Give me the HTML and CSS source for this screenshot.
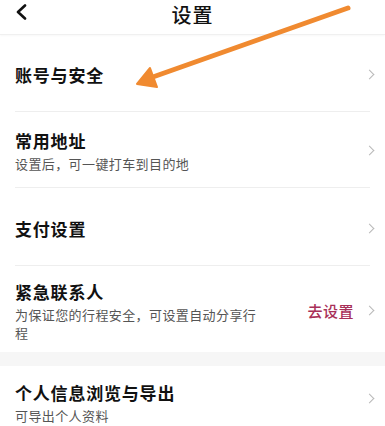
FILE: index.html
```html
<!DOCTYPE html>
<html lang="zh-CN">
<head>
    <meta charset="UTF-8">
    <meta name="viewport" content="width=device-width, initial-scale=1.0">
    <title>设置</title>
    <link rel="stylesheet" href="styles.css">
</head>
<body>
    <div class="page">
        <div class="header">
            <svg class="back" width="12" height="16" viewBox="0 0 12 16">
                <path d="M10 1.5 L3 8 L10 14.5" fill="none" stroke="#111" stroke-width="2.6" stroke-linecap="round" stroke-linejoin="round"/>
            </svg>
            <div class="title">设置</div>
        </div>

        <div class="group">
            <div class="row row-1">
                <div class="text">
                    <div class="name">账号与安全</div>
                </div>
                <span class="chev"></span>
            </div>
            <div class="row row-2">
                <div class="text">
                    <div class="name">常用地址</div>
                    <div class="sub">设置后，可一键打车到目的地</div>
                </div>
                <span class="chev"></span>
            </div>
            <div class="row row-3">
                <div class="text">
                    <div class="name">支付设置</div>
                </div>
                <span class="chev"></span>
            </div>
            <div class="row row-4">
                <div class="text">
                    <div class="name">紧急联系人</div>
                    <div class="sub narrow">为保证您的行程安全，可设置自动分享行程</div>
                </div>
                <span class="action">去设置</span>
                <span class="chev"></span>
            </div>
        </div>

        <div class="band"></div>

        <div class="group">
            <div class="row row-5">
                <div class="text">
                    <div class="name">个人信息浏览与导出</div>
                    <div class="sub">可导出个人资料</div>
                </div>
                <span class="chev"></span>
            </div>
        </div>

        <!-- annotation arrow drawn over the screenshot -->
        <svg class="pointer" width="385" height="120" viewBox="0 0 385 120">
            <line x1="348" y1="8" x2="150" y2="78" stroke="#f08a30" stroke-width="5" stroke-linecap="round"/>
            <polygon points="137,84 150,68 157,87" fill="#f08a30" stroke="#f08a30" stroke-width="2" stroke-linejoin="round"/>
        </svg>
    </div>
</body>
</html>
```

FILE: styles.css
```css
* {
    margin: 0;
    padding: 0;
    box-sizing: border-box;
}

body {
    font-family: "Noto Sans CJK SC", "Noto Sans", sans-serif;
    background-color: #fff;
    color: #111;
}

.page {
    position: relative;
    width: 385px;
    height: 426px;
    overflow: hidden;
}

.header {
    position: relative;
    height: 35px;
    display: flex;
    align-items: flex-start;
    justify-content: center;
    border-bottom: 1px solid #f0f0f0;
    box-shadow: 0 1px 2px rgba(0,0,0,0.03);
}

.back {
    position: absolute;
    left: 15px;
    top: 4px;
}

.title {
    font-size: 20px;
    font-weight: 500;
    letter-spacing: 1px;
    line-height: 29px;
}

.group {
    padding: 0 15px;
}

.row {
    display: flex;
    align-items: center;
    border-bottom: 1px solid #eee;
}

.row:last-child {
    border-bottom: none;
}

.row-1 { height: 77px; padding-top: 3px; }
.row-2 { height: 76px; padding-top: 2px; }
.row-3 { height: 78px; padding-top: 4px; }
.row-4 { height: 86px; padding-top: 3px; }
.row-5 { height: 60px; align-items: flex-start; padding-top: 15px; }

.row-5 .chev {
    margin-top: 14px;
}

.text {
    flex: 1;
}

.name {
    font-size: 17px;
    font-weight: 700;
    letter-spacing: 0.8px;
    line-height: 24px;
}

.sub {
    font-size: 13px;
    color: #555;
    letter-spacing: 0.4px;
    line-height: 18px;
    margin-top: 2px;
}

.narrow {
    width: 250px;
}

.action {
    font-size: 15px;
    font-weight: 500;
    color: #a83058;
    letter-spacing: 0.5px;
    margin-right: 12px;
}

.chev {
    width: 7px;
    height: 7px;
    border-top: 1px solid #b8b8b8;
    border-right: 1px solid #b8b8b8;
    transform: rotate(45deg);
    margin-right: -3px;
}

.band {
    height: 14px;
    background-color: #f6f6f6;
}

.pointer {
    position: absolute;
    left: 0;
    top: 0;
}
```
